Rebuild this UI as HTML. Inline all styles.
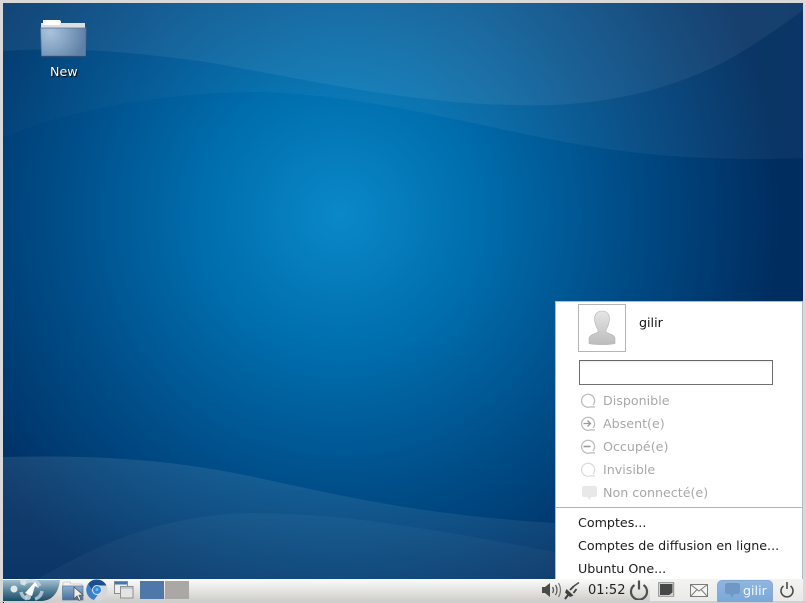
<!DOCTYPE html>
<html><head><meta charset="utf-8"><style>
html,body{margin:0;padding:0;width:806px;height:603px;overflow:hidden;background:#d9d9d9}
body{position:relative;font-family:"DejaVu Sans",sans-serif;font-size:12.67px}
.a{position:absolute;white-space:nowrap}
svg{position:absolute;display:block}
</style></head><body>
<svg style="left:0;top:0" width="806" height="603" viewBox="0 0 806 603">
<defs>
<radialGradient id="bg" gradientUnits="userSpaceOnUse" cx="340" cy="215" r="440">
<stop offset="0" stop-color="#0a88c8"/><stop offset=".3" stop-color="#006fae"/><stop offset=".62" stop-color="#004f8a"/><stop offset="1" stop-color="#002d60"/></radialGradient>
<linearGradient id="w1" x1="0" y1="0" x2="1" y2="0"><stop offset="0" stop-color="#fff" stop-opacity=".06"/><stop offset=".65" stop-color="#fff" stop-opacity=".06"/><stop offset="1" stop-color="#fff" stop-opacity=".05"/></linearGradient>
<linearGradient id="w2" x1="0" y1="0" x2="1" y2="0"><stop offset="0" stop-color="#fff" stop-opacity=".015"/><stop offset=".6" stop-color="#fff" stop-opacity=".05"/><stop offset="1" stop-color="#fff" stop-opacity=".04"/></linearGradient>
<linearGradient id="w3" x1="0" y1="0" x2="0" y2="1"><stop offset="0" stop-color="#fff" stop-opacity=".09"/><stop offset="1" stop-color="#fff" stop-opacity=".04"/></linearGradient>
</defs>
<rect x="3" y="3" width="800" height="577" fill="url(#bg)"/>
<path d="M3 138C70 108 170 92 257 92C360 94 460 122 565 142C650 158 730 161 803 158V3H3Z" fill="url(#w2)"/>
<path d="M3 51C60 47 120 50 206 62C300 78 410 104 514 105C600 108 680 90 745 50C770 34 790 20 803 10V3H3Z" fill="url(#w1)"/>
<path d="M3 457C90 455 170 458 268 480C360 500 450 520 600 525V580H3Z" fill="url(#w3)"/>
<path d="M36 580C80 555 150 515 250 513C360 513 460 535 600 560V580Z" fill="#fff" fill-opacity=".035"/>
</svg>

<!-- desktop folder -->
<svg style="left:38px;top:18px" width="50" height="42" viewBox="0 0 50 42">
<defs><radialGradient id="fd" gradientUnits="userSpaceOnUse" cx="12" cy="14" r="36"><stop offset="0" stop-color="#aac3dc"/><stop offset=".6" stop-color="#7d9cbd"/><stop offset="1" stop-color="#5f80a5"/></radialGradient></defs>
<path d="M5 5V3.500q0-1 1-1H22q1 0 1 1V5H47v6H3V5Z" fill="#f4f4f2"/>
<rect x="3" y="5" width="44" height="5" fill="#dedede"/>
<rect x="5" y="2" width="17" height="5" fill="#fff"/>
<path d="M2.500 10H48l-.5 28H3.500Z" fill="url(#fd)" stroke="#55708f" stroke-width=".8"/>
<rect x="3" y="38" width="45" height="1.500" fill="#2b4a6b" opacity=".7"/>
</svg>
<div class="a" style="left:50px;top:64px;color:#fff;text-shadow:1px 1px 1px #000">New</div>

<!-- popup -->
<div class="a" style="left:555px;top:301px;width:246px;height:278px;background:#fff;border:1px solid #a9bccb;border-bottom:1px solid #aaa"></div>
<div class="a" style="left:578px;top:304px;width:46px;height:46px;border:1px solid #b5b5b5;background:#fff"></div>
<svg style="left:588px;top:310px" width="28" height="36" viewBox="0 0 28 36">
<defs><linearGradient id="av" x1="0" y1="0" x2="0" y2="1"><stop offset="0" stop-color="#e6e6e6"/><stop offset="1" stop-color="#bcbcbc"/></linearGradient></defs>
<path d="M14 1c5 0 7.500 3.500 7.500 8S19 18 18 20v2c3 2 8 2.500 9 6v5.500c-4 1.500-22 1.500-26 0V28c1-3.500 6-4 9-6v-2C9 18 6.500 13.500 6.500 9S9 1 14 1Z" fill="url(#av)" stroke="#b2b2b2" stroke-width=".6"/>
</svg>
<div class="a" style="left:639px;top:315px;color:#111">gilir</div>
<div class="a" style="left:579px;top:360px;width:192px;height:23px;border:1px solid #6f6f6f;border-top-color:#666;background:linear-gradient(#efefef,#fff 3px)"></div>

<svg style="left:578px;top:391px" width="20" height="112" viewBox="0 0 20 112" fill="none">
<g stroke="#bdbdbd" stroke-width="1.300">
<path d="M15 14a6.500 6.500 0 1 0-2.500 1.800L17 16"/>
<path d="M15 37a6.500 6.500 0 1 0-2.500 1.800L17 39"/>
<path d="M5.500 32.500h7M9.500 29.500l3 3-3 3" stroke="#999"/>
<path d="M15 60a6.500 6.500 0 1 0-2.500 1.800L17 62"/>
<path d="M5.500 55.500h7" stroke="#999" stroke-width="1.600"/>
<path stroke="#dcdcdc" d="M15 83a6.500 6.500 0 1 0-2.500 1.800L17 85"/>
</g>
<path d="M6 95h10q3 0 3 2.500v6q0 2.500-3 2.500h-3l-1 3-3-3H6q-2 0-2-2.500v-6Q4 95 6 95Z" fill="#e8e8e8"/>
</svg>
<div class="a" style="left:603px;top:393px;color:#aaa8a6">Disponible</div>
<div class="a" style="left:603px;top:416px;color:#aaa8a6">Absent(e)</div>
<div class="a" style="left:603px;top:439px;color:#aaa8a6">Occupé(e)</div>
<div class="a" style="left:603px;top:462px;color:#aaa8a6">Invisible</div>
<div class="a" style="left:603px;top:485px;color:#aaa8a6">Non connecté(e)</div>
<div class="a" style="left:556px;top:507px;width:246px;height:1px;background:#b4b4b4"></div>
<div class="a" style="left:578px;top:515px;color:#1c1c1c">Comptes...</div>
<div class="a" style="left:578px;top:538px;color:#1c1c1c">Comptes de diffusion en ligne...</div>
<div class="a" style="left:578px;top:561px;color:#1c1c1c">Ubuntu One...</div>

<!-- panel -->
<div class="a" style="left:3px;top:579px;width:800px;height:22px;background:linear-gradient(#fbfbfa,#eeeeec 30%,#cfcecb)"></div>
<div class="a" style="left:650px;top:579px;width:153px;height:22px;background:linear-gradient(#f4f4f2,#e9e9e7)"></div>
<div class="a" style="left:0;top:601px;width:806px;height:2px;background:#cfcfcf"></div>
<div class="a" style="left:3px;top:602px;width:1px;height:1px;background:#000"></div>

<!-- logo -->
<svg style="left:3px;top:579px" width="58" height="22" viewBox="0 0 58 22">
<defs><linearGradient id="lg" x1="0" y1="0" x2="0" y2="1"><stop offset="0" stop-color="#a4c0d0"/><stop offset=".45" stop-color="#5d889f"/><stop offset="1" stop-color="#1b4c66"/></linearGradient></defs>
<path d="M0 1H57C56 12 50 22 38 22H0Z" fill="url(#lg)"/>
<g fill="none" stroke="#cfdde4" stroke-width="3.500" opacity=".75"><path d="M20 6a10 10 0 0 1 17 1"/><path d="M39 12a10 10 0 0 1-7 8"/><path d="M24 20a10 10 0 0 1-6-7"/></g>
<circle cx="11" cy="10" r="3.500" fill="#dfe8ec"/><circle cx="20" cy="3" r="3" fill="#dfe8ec" opacity=".8"/><circle cx="25" cy="18" r="3" fill="#cfdce3" opacity=".8"/>
<path d="M22 14L32 3l4 6-4-2-3 10Z" fill="#fff"/>
</svg>
<!-- folder launcher -->
<svg style="left:62px;top:580px" width="22" height="21" viewBox="0 0 22 21">
<defs><linearGradient id="lf" x1="0" y1="0" x2="0" y2="1"><stop offset="0" stop-color="#8fb0d0"/><stop offset="1" stop-color="#436f9e"/></linearGradient></defs>
<path d="M1 3q0-1 1-1h6l1 2h10q1 0 1 1v2H1Z" fill="#f2f2f0" stroke="#aeb6bd" stroke-width=".6"/>
<rect x=".5" y="6" width="20.500" height="14" fill="url(#lf)" stroke="#5b7795" stroke-width=".7"/>
<path d="M12 7l0 12 3-3 2 4.500 2-1-2-4.300 4-.2Z" fill="#eee" stroke="#555" stroke-width=".8"/>
</svg>
<!-- chromium -->
<svg style="left:86px;top:579px" width="22" height="22" viewBox="0 0 22 22">
<circle cx="11" cy="11" r="10.500" fill="#d4d8dc"/>
<path d="M11 .5A10.500 10.500 0 0 1 20.500 6.500H11a4.500 4.500 0 0 0-4.400 5.500L2 5A10.500 10.500 0 0 1 11 .5Z" fill="#1c4f92"/>
<path d="M2 5l4.800 8A4.500 4.500 0 0 0 12 15.500L8 21A10.500 10.500 0 0 1 2 5Z" fill="#3b7fc9"/>
<circle cx="11" cy="11" r="5" fill="#dfe6ee"/><circle cx="11" cy="11" r="4" fill="#2f8ade"/><circle cx="11" cy="10.500" r="1.500" fill="#6cb8f0"/>
</svg>
<!-- windows -->
<svg style="left:114px;top:581px" width="20" height="18" viewBox="0 0 20 18">
<rect x=".5" y=".5" width="13" height="12" fill="#eee" stroke="#8a8a88"/><rect x="1" y="1" width="12" height="2.500" fill="#3f76b5"/>
<rect x="6.500" y="5.500" width="12.500" height="11.500" fill="#e4e4e2" stroke="#8f8f8d"/><rect x="7" y="6" width="11.500" height="2" fill="#bfc7d0"/>
</svg>
<div class="a" style="left:140px;top:581px;width:24px;height:18px;background:#4f77a8"></div>
<div class="a" style="left:165px;top:581px;width:24px;height:18px;background:#aaa7a4"></div>

<!-- tray -->
<svg style="left:540px;top:580px" width="42" height="21" viewBox="0 0 42 21" fill="none">
<path d="M2 7h3l5-4v14l-5-4H2Z" fill="#4a4a48"/>
<path d="M12.500 7q2 3 0 6" stroke="#5a5a58" stroke-width="1.400"/><path d="M15.500 5q3 5 0 10" stroke="#5a5a58" stroke-width="1.300"/><path d="M18.500 3q4 7 0 14" stroke="#777" stroke-width="1.200"/>
<path d="M25 19l3-4" stroke="#3f3f3d" stroke-width="2"/><path d="M26.500 9l7 6.500-3.500 1.500-5-4.500Z" fill="#3f3f3d"/><path d="M30 10l4-4M33.500 13l3-4" stroke="#3f3f3d" stroke-width="1.800"/><path d="M34 6l5-3.500" stroke="#4f4f4d" stroke-width="1.600"/>
</svg>
<div class="a" style="left:588px;top:583px;color:#222;font-size:13px">01:52</div>
<svg style="left:629px;top:579px" width="20" height="21" viewBox="0 0 20 21" fill="none" stroke="#4f4f4d" stroke-width="2.200">
<path d="M5.500 6a8 8 0 1 0 9 0"/><path d="M10 1.500v9"/>
</svg>
<svg style="left:658px;top:582px" width="17" height="16" viewBox="0 0 17 16">
<rect x=".7" y=".7" width="15" height="13.500" fill="#e8e8e6" stroke="#8a8a88"/><rect x="2" y="2" width="12.500" height="11" fill="#454748"/><path d="M10 14l5-4v4Z" fill="#d5d5d3"/>
</svg>
<svg style="left:690px;top:583px" width="18" height="15" viewBox="0 0 18 15" fill="none" stroke="#7b7b79">
<rect x=".5" y="1.500" width="17" height="12" fill="#f5f5f3"/><path d="M.5 1.500L9 8l8.500-6.500M.5 13.500L7 6.500M17.500 13.500L11 6.500"/>
</svg>
<div class="a" style="left:717px;top:580px;width:54px;height:21px;border:1px solid #85a9d1;border-bottom:none;border-radius:5px 5px 0 0;background:linear-gradient(#8fb6e0,#7ba7d8)"></div>
<svg style="left:724px;top:582px" width="17" height="17" viewBox="0 0 17 17">
<path d="M3.500 1h10q2.500 0 2.500 2.500v6q0 2.500-2.500 2.500H10l-2 4-2-4H3.500Q1 12 1 9.500v-6Q1 1 3.500 1Z" fill="#7197c4"/>
</svg>
<div class="a" style="left:743px;top:583px;color:#f4f8fc">gilir</div>
<svg style="left:779px;top:581px" width="16" height="17" viewBox="0 0 16 17" fill="none" stroke="#4a4a48" stroke-width="1.600">
<path d="M4.500 5a6 6 0 1 0 7 0"/><path d="M8 1v7"/>
</svg>
</body></html>
